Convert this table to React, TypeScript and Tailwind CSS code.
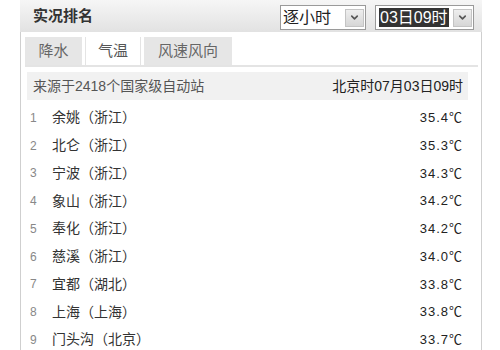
import { ChevronDown } from 'lucide-react'

type Station = { rank: number; name: string; prov: string; temp: string }

const stations: Station[] = [
  { rank: 1, name: '余姚', prov: '浙江', temp: '35.4' },
  { rank: 2, name: '北仑', prov: '浙江', temp: '35.3' },
  { rank: 3, name: '宁波', prov: '浙江', temp: '34.3' },
  { rank: 4, name: '象山', prov: '浙江', temp: '34.2' },
  { rank: 5, name: '奉化', prov: '浙江', temp: '34.2' },
  { rank: 6, name: '慈溪', prov: '浙江', temp: '34.0' },
  { rank: 7, name: '宜都', prov: '湖北', temp: '33.8' },
  { rank: 8, name: '上海', prov: '上海', temp: '33.8' },
  { rank: 9, name: '门头沟', prov: '北京', temp: '33.7' },
]

const cjk = "font-['Liberation_Sans','Noto_Sans_CJK_SC',sans-serif]"

function Arrow() {
  return (
    <div className="w-[19px] h-[18px] bg-gradient-to-b from-[#eeeeee] to-[#d6d6d6] border border-[#c4c4c4] flex items-center justify-center">
      <ChevronDown size={11} strokeWidth={3.5} className="text-[#555]" />
    </div>
  )
}

export default function App() {
  return (
    <div className={`w-[500px] h-[350px] bg-white overflow-hidden ${cjk}`}>
      <div className="ml-[20px] w-[462px]">
        {/* Header */}
        <div className="h-[32px] flex items-center justify-between pl-[13px] pr-[8px] bg-gradient-to-b from-[#f6f6f6] to-[#e2e2e2]">
          <span className="text-[15px] font-bold text-[#333]">实况排名</span>
          <div className="flex items-center gap-[9px] pt-[3px]">
            <div className="w-[86px] h-[25px] bg-white border border-[#9a9a9a] flex items-center justify-between pl-[2px] pr-[1px]">
              <span className="text-[16px] text-[#222] leading-none">逐小时</span>
              <Arrow />
            </div>
            <div className="w-[99px] h-[25px] bg-white border border-[#9a9a9a] flex items-center justify-between pl-[3px] pr-[1px]">
              <span className="text-[16px] leading-[19px] bg-[#333] text-white px-[1px]">03日09时</span>
              <Arrow />
            </div>
          </div>
        </div>

        {/* Body */}
        <div className="border-x border-[#cfcfcf] h-[318px] pl-[4px] pr-[3px]">
          <div className="pt-[5px] flex gap-[3px] border-b-2 border-[#e4e4e4] h-[35px]">
            <div className="w-[57px] h-[28px] bg-[#e6e6e6] flex items-center justify-center text-[15px] text-[#666]">降水</div>
            <div className="w-[56px] h-[28px] bg-white border-x border-[#e4e4e4] flex items-center justify-center text-[15px] text-[#555]">气温</div>
            <div className="w-[88px] h-[28px] bg-[#e6e6e6] flex items-center justify-center text-[15px] text-[#666]">风速风向</div>
          </div>

          <div className="mt-[5px] ml-[2px] mr-[10px] h-[28px] bg-[#f1f1f1] flex items-center justify-between pl-[6px] pr-[5px] text-[14px]">
            <span className="text-[#555]">来源于2418个国家级自动站</span>
            <span className="text-[#222]">北京时07月03日09时</span>
          </div>

          <ul className="mt-[4px] ml-[2px] mr-[10px]">
            {stations.map(s => (
              <li key={s.rank} className="h-[27.75px] flex items-center pl-[3px] pr-[5px]">
                <span className="w-[22px] text-[12px] text-[#888]">{s.rank}</span>
                <span className="flex-1 text-[14px] text-[#333]">{s.name}（{s.prov}）</span>
                <span className="text-[13px] tracking-[1px] text-[#222]">{s.temp}℃</span>
              </li>
            ))}
          </ul>
        </div>
      </div>
    </div>
  )
}
